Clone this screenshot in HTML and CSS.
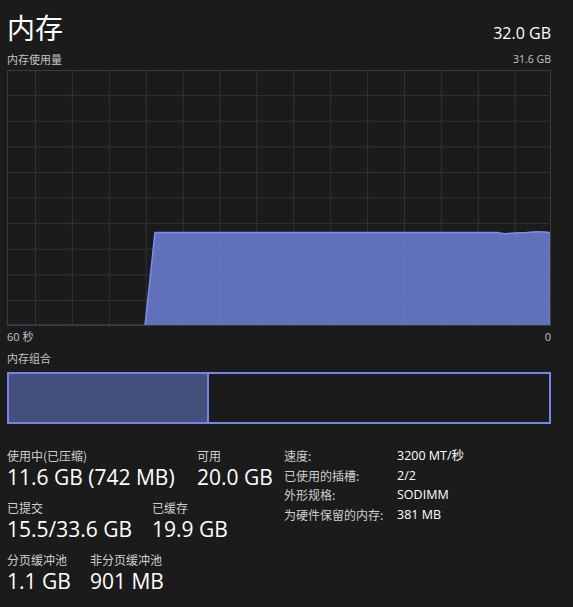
FILE: index.html
```html
<!DOCTYPE html>
<html lang="zh-CN">
<head>
<meta charset="utf-8">
<title>内存</title>
<link rel="stylesheet" href="styles.css">
</head>
<body>
<main class="page">
  <header class="head">
    <h1 class="title">内存</h1>
    <span class="total">32.0 GB</span>
  </header>
  <div class="caption">
    <span>内存使用量</span>
    <span>31.6 GB</span>
  </div>
  <div class="graph">
    <svg viewBox="0 0 544 256" width="544" height="256" aria-hidden="true">
      <g class="grid">
        <line x1="28.5" y1="0" x2="28.5" y2="256"/>
        <line x1="65.4" y1="0" x2="65.4" y2="256"/>
        <line x1="102.3" y1="0" x2="102.3" y2="256"/>
        <line x1="139.2" y1="0" x2="139.2" y2="256"/>
        <line x1="176.1" y1="0" x2="176.1" y2="256"/>
        <line x1="213" y1="0" x2="213" y2="256"/>
        <line x1="249.9" y1="0" x2="249.9" y2="256"/>
        <line x1="286.8" y1="0" x2="286.8" y2="256"/>
        <line x1="323.7" y1="0" x2="323.7" y2="256"/>
        <line x1="360.6" y1="0" x2="360.6" y2="256"/>
        <line x1="397.5" y1="0" x2="397.5" y2="256"/>
        <line x1="434.4" y1="0" x2="434.4" y2="256"/>
        <line x1="471.3" y1="0" x2="471.3" y2="256"/>
        <line x1="508.2" y1="0" x2="508.2" y2="256"/>
        <line x1="0" y1="25.6" x2="544" y2="25.6"/>
        <line x1="0" y1="51.2" x2="544" y2="51.2"/>
        <line x1="0" y1="76.8" x2="544" y2="76.8"/>
        <line x1="0" y1="102.4" x2="544" y2="102.4"/>
        <line x1="0" y1="128" x2="544" y2="128"/>
        <line x1="0" y1="153.6" x2="544" y2="153.6"/>
        <line x1="0" y1="179.2" x2="544" y2="179.2"/>
        <line x1="0" y1="204.8" x2="544" y2="204.8"/>
        <line x1="0" y1="230.4" x2="544" y2="230.4"/>
      </g>
      <path class="area" d="M0 255.5 L138 255.5 L148 162.6 L490 162.6 Q497 164.4 504 163.2 Q512 162.6 520 162.4 Q530 161.2 538 162 L543.5 162.6 L543.5 256 L0 256 Z"/>
      <path class="line" d="M0 255.5 L138 255.5 L148 162.6 L490 162.6 Q497 164.4 504 163.2 Q512 162.6 520 162.4 Q530 161.2 538 162 L543.5 162.6 L543.5 255.5"/>
      <rect class="frame" x="0.5" y="0.5" width="543" height="255"/>
    </svg>
  </div>
  <div class="axis">
    <span>60 秒</span>
    <span>0</span>
  </div>
  <div class="caption caption-comp">
    <span>内存组合</span>
  </div>
  <div class="composition">
    <div class="comp-used"></div>
    <div class="comp-free"></div>
  </div>

  <section class="stats">
    <div class="stats-left">
      <div class="stat-row">
        <div class="stat stat-inuse">
          <div class="label">使用中(已压缩)</div>
          <div class="value">11.6 GB (742 MB)</div>
        </div>
        <div class="stat">
          <div class="label">可用</div>
          <div class="value">20.0 GB</div>
        </div>
      </div>
      <div class="stat-row">
        <div class="stat stat-commit">
          <div class="label">已提交</div>
          <div class="value">15.5/33.6 GB</div>
        </div>
        <div class="stat">
          <div class="label">已缓存</div>
          <div class="value">19.9 GB</div>
        </div>
      </div>
      <div class="stat-row">
        <div class="stat stat-paged">
          <div class="label">分页缓冲池</div>
          <div class="value">1.1 GB</div>
        </div>
        <div class="stat">
          <div class="label">非分页缓冲池</div>
          <div class="value">901 MB</div>
        </div>
      </div>
    </div>
    <dl class="specs">
      <dt>速度:</dt><dd>3200 MT/秒</dd>
      <dt>已使用的插槽:</dt><dd>2/2</dd>
      <dt>外形规格:</dt><dd>SODIMM</dd>
      <dt>为硬件保留的内存:</dt><dd>381 MB</dd>
    </dl>
  </section>
</main>
</body>
</html>
```

FILE: styles.css
```css
html, body {
  margin: 0;
  padding: 0;
  background: #1b1b1b;
}
body {
  font-family: "Open Sans", "Noto Sans CJK SC", sans-serif;
  color: #ffffff;
  width: 573px;
  height: 607px;
  overflow: hidden;
}
.page {
  padding: 0 22px 0 7px;
}
.head {
  display: flex;
  justify-content: space-between;
  align-items: flex-end;
  height: 47px;
}
.title {
  margin: 0;
  font-family: "Noto Sans CJK SC", sans-serif;
  font-weight: 400;
  font-size: 28px;
  line-height: 40px;
  margin-top: 9px;
}
.total {
  font-size: 16px;
  line-height: 20px;
  margin-bottom: 4px;
}
.caption {
  display: flex;
  justify-content: space-between;
  font-size: 11px;
  line-height: 16px;
  color: #c4c4c4;
  height: 16px;
  margin-top: 4px;
}
.caption span:first-child {
  font-family: "Noto Sans CJK SC", sans-serif;
}
.caption span + span {
  font-size: 10.5px;
}
.graph {
  margin-top: 3px;
  height: 256px;
}
.graph svg {
  display: block;
}
.grid line {
  stroke: #333333;
  stroke-width: 1;
}
.frame {
  fill: none;
  stroke: #3a3a3a;
  stroke-width: 1;
}
.area {
  fill: rgba(108, 127, 212, 0.86);
}
.line {
  fill: none;
  stroke: #7a8df0;
  stroke-width: 1.5;
}
.axis {
  display: flex;
  justify-content: space-between;
  font-size: 11px;
  line-height: 16px;
  color: #c4c4c4;
  margin-top: 3px;
}
.caption-comp {
  margin-top: 5px;
}
.composition {
  margin-top: 6px;
  height: 52px;
  box-sizing: border-box;
  border: 2px solid #7385e6;
  display: flex;
}
.comp-used {
  width: 198px;
  background: #454f7b;
  border-right: 2px solid #7385e6;
}
.comp-free {
  flex: 1;
}
.stats {
  display: flex;
  margin-top: 24px;
}
.stats-left {
  width: 277px;
}
.stat-row {
  display: flex;
  height: 52px;
}
.stat {
  display: flex;
  flex-direction: column;
}
.stat-inuse { width: 190px; }
.stat-commit { width: 145px; }
.stat-paged { width: 83px; }
.label {
  font-family: "Noto Sans CJK SC", sans-serif;
  font-size: 12px;
  line-height: 16px;
  color: #cfcfcf;
}
.value {
  font-size: 21px;
  line-height: 26px;
  color: #ffffff;
}
.specs {
  margin: 0;
  display: grid;
  grid-template-columns: 113px auto;
  grid-auto-rows: 19.7px;
  font-size: 12px;
  line-height: 16px;
}
.specs dt {
  font-family: "Noto Sans CJK SC", sans-serif;
  color: #cfcfcf;
}
.specs dd {
  margin: 0;
  color: #ffffff;
  font-size: 12.5px;
}
```
